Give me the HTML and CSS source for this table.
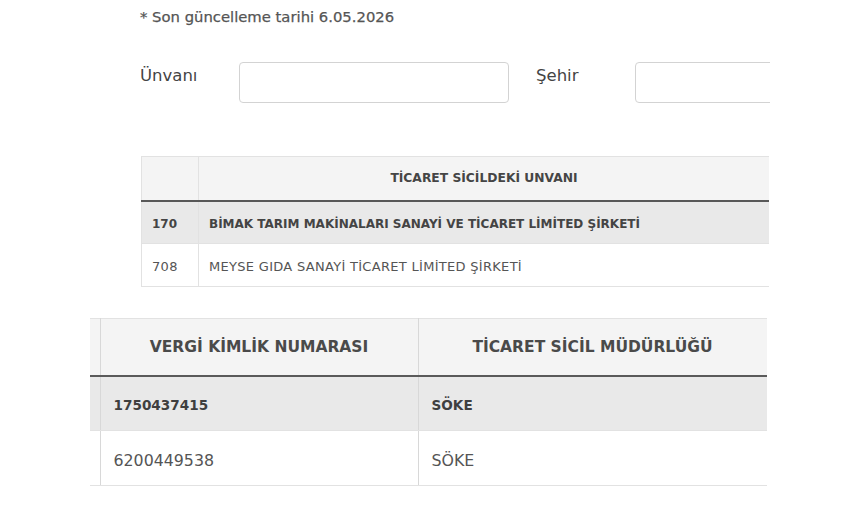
FILE: index.html
```html
<!DOCTYPE html>
<html lang="tr">
<head>
<meta charset="utf-8">
<link rel="stylesheet" href="styles.css">
</head>
<body>
<div class="page">
  <section class="search">
    <p class="updated">* Son güncelleme tarihi 6.05.2026</p>
    <div class="filters">
      <label class="label label-unvan">Ünvanı</label>
      <div class="input input-unvan"></div>
      <label class="label label-sehir">Şehir</label>
      <div class="input input-sehir"></div>
    </div>
  </section>

  <div class="clip clip-one">
    <table class="grid grid-one">
      <thead>
        <tr><th class="c-no"></th><th class="c-name">TİCARET SİCİLDEKİ UNVANI</th></tr>
      </thead>
      <tbody>
        <tr class="active"><td class="c-no">170</td><td class="c-name">BİMAK TARIM MAKİNALARI SANAYİ VE TİCARET LİMİTED ŞİRKETİ</td></tr>
        <tr><td class="c-no">708</td><td class="c-name">MEYSE GIDA SANAYİ TİCARET LİMİTED ŞİRKETİ</td></tr>
      </tbody>
    </table>
  </div>

  <div class="clip clip-two">
    <table class="grid grid-two">
      <thead>
        <tr><th class="c-cut"></th><th class="c-vkn">VERGİ KİMLİK NUMARASI</th><th class="c-mud">TİCARET SİCİL MÜDÜRLÜĞÜ</th></tr>
      </thead>
      <tbody>
        <tr class="active"><td class="c-cut"></td><td class="c-vkn">1750437415</td><td class="c-mud">SÖKE</td></tr>
        <tr><td class="c-cut"></td><td class="c-vkn">6200449538</td><td class="c-mud">SÖKE</td></tr>
      </tbody>
    </table>
  </div>
</div>
</body>
</html>
```

FILE: styles.css
```css
* { box-sizing: border-box; }
html, body { margin: 0; padding: 0; background: #fff; }
body {
  font-family: "DejaVu Sans", "Open Sans", sans-serif;
  color: #444;
  width: 860px;
  height: 505px;
  overflow: hidden;
}
.page { padding-top: 8px; }

.search {
  width: 770px;
  padding-left: 140px;
  overflow: hidden;
}
.updated {
  margin: 0;
  font-size: 14.8px;
  color: #555;
  line-height: 18px;
  -webkit-text-stroke: 0.25px #555;
}
.filters {
  display: flex;
  align-items: center;
  margin-top: 36px;
  height: 41px;
  white-space: nowrap;
}
.label {
  flex: none;
  font-size: 16.5px;
  color: #444;
  margin-top: -15px;
}
.label-unvan { width: 99px; }
.label-sehir { width: 99px; }
.input {
  height: 41px;
  border: 1px solid #d3d3d3;
  border-radius: 4px;
  background: #fff;
  flex: none;
}
.input-unvan { width: 270px; margin-right: 27px; }
.input-sehir { width: 200px; }

.clip { overflow: hidden; }
.clip-one {
  margin-left: 141px;
  width: 628px;
  margin-top: 53px;
}
.clip-two {
  margin-left: 90px;
  width: 677px;
  margin-top: 31px;
}

.grid {
  border-collapse: collapse;
  table-layout: fixed;
}
.grid th, .grid td { padding: 0; white-space: nowrap; }

.grid-one { width: 628px; }
.grid-one th {
  background: #f4f4f4;
  height: 44px;
  font-size: 12.3px;
  font-weight: 700;
  color: #454545;
  border-top: 1px solid #e2e2e2;
  border-bottom: 2px solid #585858;
}
.grid-one td {
  height: 43px;
  font-size: 13px;
  letter-spacing: 0.3px;
  color: #555;
  border-bottom: 1px solid #e2e2e2;
  padding: 3px 0 0 10px;
}
.grid-one .c-no { width: 57px; border-left: 1px solid #e2e2e2; border-right: 1px solid #e2e2e2; }
.grid-one .active td { background: #e9e9e9; font-weight: 700; color: #444; font-size: 12px; letter-spacing: 0; }

.grid-two { width: 677px; }
.grid-two th {
  background: #f4f4f4;
  height: 57px;
  font-size: 15.5px;
  font-weight: 700;
  color: #4a4a4a;
  border-top: 1px solid #e2e2e2;
  border-bottom: 2px solid #5a5a5a;
}
.grid-two td {
  height: 55px;
  font-size: 15.8px;
  color: #555;
  border-bottom: 1px solid #e2e2e2;
  padding: 4px 0 0 13px;
}
.grid-two .c-cut { width: 10px; padding: 0; border-right: 1px solid #d8d8d8; }
.grid-two .c-vkn { width: 318px; border-right: 1px solid #d8d8d8; }
.grid-two .c-mud { width: 349px; border-right: 1px solid #e2e2e2; }
.grid-two .active td { background: #e9e9e9; font-weight: 700; color: #3f3f3f; font-size: 13.6px; }
.grid-two .active .c-cut, .grid-two .c-cut { padding: 0; }
```
